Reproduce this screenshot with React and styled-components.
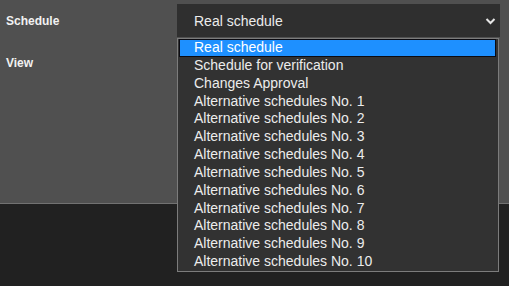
import styled, { createGlobalStyle } from "styled-components";

const GlobalStyle = createGlobalStyle`
  html, body {
    margin: 0;
    background: #212121;
    font-family: "Liberation Sans", Arial, sans-serif;
  }
`;

const Page = styled.div`
  min-height: 100vh;
  display: flex;
  flex-direction: column;
  background: #212121;
`;

const Panel = styled.div`
  height: 204px;
  flex-shrink: 0;
  box-sizing: border-box;
  background: #505050;
  border-bottom: 1px solid #727272;
  padding-top: 4px;
  display: grid;
  grid-template-columns: 177px 323px;
  grid-auto-rows: min-content;
  row-gap: 17px;
  position: relative;
  z-index: 1;
`;

const Label = styled.div`
  padding-left: 6px;
  font-size: 12px;
  font-weight: bold;
  color: #f2f2f2;
  display: flex;
  align-items: center;
  height: ${(p) => p.$h || 33}px;
`;

const SelectWrap = styled.div`
  position: relative;
`;

const SelectBox = styled.div`
  height: 33px;
  box-sizing: border-box;
  background: #2f2f2f;
  display: flex;
  align-items: center;
  justify-content: space-between;
  padding: 0 4px 0 17px;
  font-size: 14px;
  color: #ececec;
`;

const Dropdown = styled.ul`
  position: absolute;
  top: 34px;
  left: 0;
  width: 322px;
  box-sizing: border-box;
  margin: 0;
  padding: 0 2px 0 1px;
  list-style: none;
  background: #323232;
  border: 1px solid #7c7c7c;
  z-index: 2;
`;

const Option = styled.li`
  height: 17.85px;
  line-height: 17.85px;
  box-sizing: border-box;
  padding-left: 15px;
  font-size: 14px;
  white-space: nowrap;
  background: ${(p) => (p.$active ? "#1e90ff" : "transparent")};
  color: ${(p) => (p.$active ? "#ffffff" : "#ececec")};
  box-shadow: ${(p) => (p.$active ? "inset 0 0 0 1px #0b0b12" : "none")};
`;

const Footer = styled.div`
  flex: 1;
  background: #212121;
`;

const Chevron = () => (
  <svg width="11" height="8" viewBox="0 0 11 8">
    <path d="M1.5 2l4 4 4-4" fill="none" stroke="#e6e6e6" strokeWidth="2" />
  </svg>
);

const options = [
  "Real schedule",
  "Schedule for verification",
  "Changes Approval",
  ...Array.from({ length: 10 }, (_, i) => `Alternative schedules No. ${i + 1}`),
];

export default function App() {
  return (
    <Page>
      <GlobalStyle />
      <Panel>
        <Label>Schedule</Label>
        <SelectWrap>
          <SelectBox>
            <span>Real schedule</span>
            <Chevron />
          </SelectBox>
          <Dropdown>
            {options.map((o, i) => (
              <Option key={o} $active={i === 0}>
                {o}
              </Option>
            ))}
          </Dropdown>
        </SelectWrap>
        <Label $h={18}>View</Label>
        <div />
      </Panel>
      <Footer />
    </Page>
  );
}
